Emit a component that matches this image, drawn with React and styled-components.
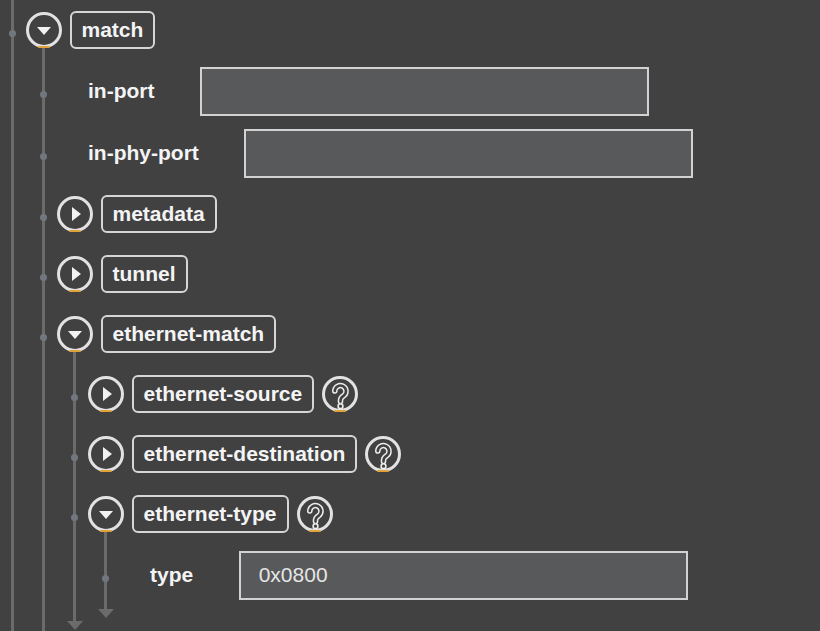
import React from 'react';
import styled, { createGlobalStyle, css } from 'styled-components';

const LINE = '#6b6b6b';
const BG = '#414142';
const ORANGE = '#e0a23a';

const GlobalStyle = createGlobalStyle`
  html, body { margin: 0; padding: 0; background: ${BG}; overflow: hidden; }
  body { font-family: "Liberation Sans", Arial, sans-serif; }
`;

const Page = styled.div`
  width: 820px;
  height: 631px;
  overflow: hidden;
  background: ${BG};
  padding-left: 11px;
  box-sizing: border-box;
`;

const Branch = styled.div`
  position: relative;
  display: flex;
  flex-direction: column;
  margin-left: ${p => (p.$root ? 0 : 31)}px;
  padding-bottom: ${p => (p.$root ? 0 : 12)}px;
  min-height: ${p => (p.$root ? '631px' : 'auto')};
  &::before {
    content: '';
    position: absolute;
    left: 0;
    width: 3px;
    top: ${p => (p.$root ? 0 : -12)}px;
    bottom: ${p => (p.$root ? 0 : 9)}px;
    background: ${LINE};
  }
  ${p =>
    !p.$root &&
    css`
      &::after {
        content: '';
        position: absolute;
        left: -6.5px;
        bottom: 0;
        width: 0;
        height: 0;
        border-left: 8px solid transparent;
        border-right: 8px solid transparent;
        border-top: 9px solid ${LINE};
      }
    `}
`;

const NodeRow = styled.div`
  position: relative;
  display: flex;
  align-items: center;
  gap: 8px;
  height: 60px;
  padding-left: 14.5px;
`;

const LeafRow = styled.div`
  position: relative;
  display: flex;
  align-items: center;
  height: 58px;
  margin: 2px 0;
  padding-left: 46px;
`;

const Dot = styled.span`
  position: absolute;
  left: -2px;
  top: calc(50% + 3px);
  margin-top: -3.5px;
  width: 7px;
  height: 7px;
  border-radius: 50%;
  background: #72777f;
`;

const RoundButton = styled.span`
  position: relative;
  flex: none;
  box-sizing: border-box;
  width: 36px;
  height: 36px;
  border: 3px solid #e2e2e2;
  border-radius: 50%;
  display: flex;
  align-items: center;
  justify-content: center;
  &::after {
    content: '';
    position: absolute;
    left: 50%;
    bottom: -3px;
    margin-left: -6px;
    width: 12px;
    height: 2px;
    border-radius: 1px;
    background: ${ORANGE};
  }
`;

const Caret = styled.span`
  width: 0;
  height: 0;
  ${p =>
    p.$open
      ? css`
          border-left: 7px solid transparent;
          border-right: 7px solid transparent;
          border-top: 8px solid #f2f2f2;
          margin-top: 2px;
        `
      : css`
          border-top: 7px solid transparent;
          border-bottom: 7px solid transparent;
          border-left: 9px solid #f2f2f2;
          margin-left: 3px;
        `}
`;

const HelpIcon = styled.span`
  position: relative;
  flex: none;
  width: 36px;
  height: 36px;
  display: block;
  svg { display: block; }
  &::after {
    content: '';
    position: absolute;
    left: 50%;
    bottom: 0px;
    margin-left: -6px;
    width: 12px;
    height: 2px;
    border-radius: 1px;
    background: ${ORANGE};
  }
`;

const Tag = styled.span`
  box-sizing: border-box;
  height: 38px;
  padding: 0 10px;
  border: 2px solid #d6d6d6;
  border-radius: 6px;
  display: flex;
  align-items: center;
  font-weight: 700;
  font-size: 21px;
  color: #f4f4f4;
  white-space: nowrap;
`;

const LeafLabel = styled.span`
  font-weight: 700;
  font-size: 21px;
  color: #f4f4f4;
  margin-right: 45.5px;
  white-space: nowrap;
`;

const ValueInput = styled.input`
  box-sizing: border-box;
  width: 449px;
  height: 49px;
  border: 2px solid #d2d2d2;
  background: #58595b;
  color: #e6e6e6;
  font-family: "Liberation Sans", Arial, sans-serif;
  font-size: 21px;
  padding: 0 18px;
  outline: none;
  margin: 0;
`;

const QPATH = 'M12.8 15 A5.6 5.6 0 1 1 21.8 19.6 C19.8 20.9 18.5 22.1 18.5 24.3 V25.6';

const Help = () => (
  <HelpIcon>
    <svg width="36" height="36" viewBox="0 0 36 36">
      <circle cx="18" cy="18" r="16.5" fill="none" stroke="#e2e2e2" strokeWidth="3" />
      <path d={QPATH} fill="none" stroke="#ececec" strokeWidth="5.6" strokeLinecap="round" />
      <path d={QPATH} fill="none" stroke={BG} strokeWidth="2.6" strokeLinecap="round" />
      <circle cx="18.5" cy="30.2" r="2.4" fill={BG} stroke="#ececec" strokeWidth="1.6" />
    </svg>
  </HelpIcon>
);

const tree = [
  {
    name: 'match',
    open: true,
    children: [
      { leaf: 'in-port', value: '' },
      { leaf: 'in-phy-port', value: '' },
      { name: 'metadata' },
      { name: 'tunnel' },
      {
        name: 'ethernet-match',
        open: true,
        children: [
          { name: 'ethernet-source', help: true },
          { name: 'ethernet-destination', help: true },
          {
            name: 'ethernet-type',
            help: true,
            open: true,
            children: [{ leaf: 'type', value: '0x0800' }],
          },
        ],
      },
    ],
  },
];

const Node = ({ node }) => {
  if (node.leaf) {
    return (
      <LeafRow>
        <Dot />
        <LeafLabel>{node.leaf}</LeafLabel>
        <ValueInput readOnly value={node.value} />
      </LeafRow>
    );
  }
  return (
    <>
      <NodeRow>
        <Dot />
        <RoundButton>
          <Caret $open={node.open} />
        </RoundButton>
        <Tag>{node.name}</Tag>
        {node.help && <Help />}
      </NodeRow>
      {node.open && node.children && (
        <Branch>
          {node.children.map((c, i) => (
            <Node key={i} node={c} />
          ))}
        </Branch>
      )}
    </>
  );
};

export default function App() {
  return (
    <>
      <GlobalStyle />
      <Page>
        <Branch $root>
          {tree.map((n, i) => (
            <Node key={i} node={n} />
          ))}
        </Branch>
      </Page>
    </>
  );
}
